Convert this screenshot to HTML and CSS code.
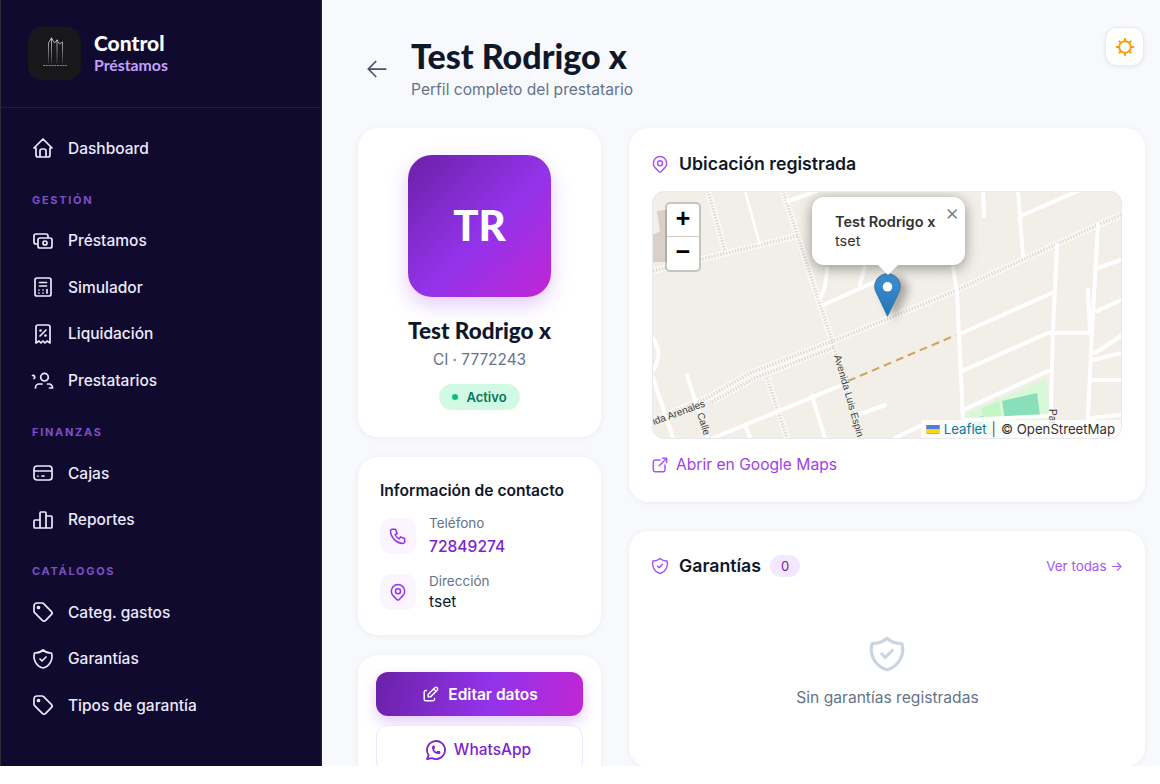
FILE: index.html
```html
<!DOCTYPE html>
<html lang="es">
<head>
    <meta charset="UTF-8">
    <meta name="viewport" content="width=device-width, initial-scale=1.0">
    <title>Test Rodrigo x</title>
    <link rel="stylesheet" href="styles.css">
</head>
<body>
    <svg class="sprite" aria-hidden="true">
        <symbol id="i-home" viewBox="0 0 24 24"><path d="M5 12H3l9-9 9 9h-2M5 12v7a2 2 0 0 0 2 2h10a2 2 0 0 0 2-2v-7M9 21v-6a2 2 0 0 1 2-2h2a2 2 0 0 1 2 2v6"/></symbol>
        <symbol id="i-cash" viewBox="0 0 24 24"><path d="M7 11a2 2 0 0 1 2-2h10a2 2 0 0 1 2 2v6a2 2 0 0 1-2 2H9a2 2 0 0 1-2-2zM12 14a2 2 0 1 0 4 0a2 2 0 1 0-4 0M17 9V7a2 2 0 0 0-2-2H5a2 2 0 0 0-2 2v6a2 2 0 0 0 2 2h2"/></symbol>
        <symbol id="i-calc" viewBox="0 0 24 24"><path d="M4 5a2 2 0 0 1 2-2h12a2 2 0 0 1 2 2v14a2 2 0 0 1-2 2H6a2 2 0 0 1-2-2zM8.500 7.500h7M8.500 11h7M8 15v.01M12 15v.01M16 14.500v3.500M8 18v.01M12 18v.01"/></symbol>
        <symbol id="i-receipt" viewBox="0 0 24 24"><path d="M9 14l6-6M9 8.500a.5.5 0 1 0 1 0a.5.5 0 1 0-1 0M14 13.500a.5.5 0 1 0 1 0a.5.5 0 1 0-1 0M5 21V5a2 2 0 0 1 2-2h10a2 2 0 0 1 2 2v16l-3-2-2 2-2-2-2 2-2-2-3 2"/></symbol>
        <symbol id="i-users" viewBox="0 0 24 24"><path d="M9.700 9.200a3.800 3.800 0 1 0 7.600 0a3.800 3.800 0 1 0-7.600 0M1.500 7.500a1.700 1.700 0 0 1 1.500 3M4.500 20v-.5a3.500 3.500 0 0 1 3.500-3.500h3M16.500 16h1.500a3.500 3.500 0 0 1 3.500 3.500v.5h-3"/></symbol>
        <symbol id="i-card" viewBox="0 0 24 24"><path d="M3 8a3 3 0 0 1 3-3h12a3 3 0 0 1 3 3v8a3 3 0 0 1-3 3H6a3 3 0 0 1-3-3zM3 10h18M7 15h.01M11 15h2"/></symbol>
        <symbol id="i-chart" viewBox="0 0 24 24"><path d="M3 13a1 1 0 0 1 1-1h4a1 1 0 0 1 1 1v6a1 1 0 0 1-1 1H4a1 1 0 0 1-1-1zM15 9a1 1 0 0 1 1-1h4a1 1 0 0 1 1 1v10a1 1 0 0 1-1 1h-4a1 1 0 0 1-1-1zM9 5a1 1 0 0 1 1-1h4a1 1 0 0 1 1 1v14a1 1 0 0 1-1 1h-4a1 1 0 0 1-1-1z"/></symbol>
        <symbol id="i-tag" viewBox="0 0 24 24"><path d="M6.500 7.500a1 1 0 1 0 2 0a1 1 0 1 0-2 0M3 6v5.172a2 2 0 0 0 .586 1.414l7.710 7.710a2.410 2.410 0 0 0 3.408 0l5.592-5.592a2.410 2.410 0 0 0 0-3.408l-7.710-7.710A2 2 0 0 0 11.172 3H6a3 3 0 0 0-3 3"/></symbol>
        <symbol id="i-shield" viewBox="0 0 24 24"><path d="M9 12l2 2l4-4M12 3a12 12 0 0 0 8.500 3a12 12 0 0 1-8.500 15a12 12 0 0 1-8.500-15a12 12 0 0 0 8.500-3"/></symbol>
        <symbol id="i-pin" viewBox="0 0 24 24"><path d="M9 11a3 3 0 1 0 6 0a3 3 0 0 0-6 0M17.657 16.657L13.414 20.900a2 2 0 0 1-2.827 0l-4.244-4.243a8 8 0 1 1 11.314 0z"/></symbol>
        <symbol id="i-phone" viewBox="0 0 24 24"><path d="M5 4h4l2 5l-2.500 1.500a11 11 0 0 0 5 5l1.500-2.500l5 2v4a2 2 0 0 1-2 2a16 16 0 0 1-15-15a2 2 0 0 1 2-2"/></symbol>
        <symbol id="i-external" viewBox="0 0 24 24"><path d="M12 6H6a2 2 0 0 0-2 2v10a2 2 0 0 0 2 2h10a2 2 0 0 0 2-2v-6M11 13l9-9M15 4h5v5"/></symbol>
        <symbol id="i-edit" viewBox="0 0 24 24"><path d="M7 7H6a2 2 0 0 0-2 2v9a2 2 0 0 0 2 2h9a2 2 0 0 0 2-2v-1M20.385 6.585a2.100 2.100 0 0 0-2.970-2.970L9 12v3h3zM16 5l3 3"/></symbol>
        <symbol id="i-whatsapp" viewBox="0 0 24 24"><path d="M3 21l1.650-3.800a9 9 0 1 1 3.400 2.900L3 21M9 10a.5.5 0 0 0 1 0V9a.5.5 0 0 0-1 0v1a5 5 0 0 0 5 5h1a.5.5 0 0 0 0-1h-1a.5.5 0 0 0 0 1"/></symbol>
        <symbol id="i-back" viewBox="0 0 24 24"><path d="M5 12h14M5 12l6 6M5 12l6-6"/></symbol>
        <symbol id="i-sun" viewBox="0 0 24 24"><circle cx="12" cy="12" r="7"/><path d="M12 2v3M12 19v3M2 12h3M19 12h3M5.200 5.200l1.600 1.600M17.200 17.200l1.600 1.600M5.200 18.800l1.600-1.600M17.200 6.800l1.600-1.600"/></symbol>
    </svg>

    <div class="app">
        <aside class="sidebar">
            <div class="brand">
                <div class="brand-logo">
                    <svg viewBox="0 0 52 52" width="52" height="52">
                        <defs>
                            <linearGradient id="logo-fade" gradientUnits="userSpaceOnUse" x1="0" y1="10" x2="0" y2="35">
                                <stop offset="0" stop-color="#e8e8ea"/>
                                <stop offset="1" stop-color="#3c3c40"/>
                            </linearGradient>
                        </defs>
                        <path class="logo-lines" d="M19.500 35V15l3-5 3 5 2.500-3 2.500 4 3-2v21M22.500 10v25M28 12v23"/>
                        <path class="logo-caption" d="M14 37.500h24"/>
                    </svg>
                </div>
                <div class="brand-text">
                    <div class="brand-name">Control</div>
                    <div class="brand-sub">Préstamos</div>
                </div>
            </div>
            <nav class="nav">
                <a class="nav-item"><svg class="icon"><use href="#i-home"/></svg>Dashboard</a>
                <div class="nav-label">GESTIÓN</div>
                <a class="nav-item"><svg class="icon"><use href="#i-cash"/></svg>Préstamos</a>
                <a class="nav-item"><svg class="icon"><use href="#i-calc"/></svg>Simulador</a>
                <a class="nav-item"><svg class="icon"><use href="#i-receipt"/></svg>Liquidación</a>
                <a class="nav-item"><svg class="icon"><use href="#i-users"/></svg>Prestatarios</a>
                <div class="nav-label">FINANZAS</div>
                <a class="nav-item"><svg class="icon"><use href="#i-card"/></svg>Cajas</a>
                <a class="nav-item"><svg class="icon"><use href="#i-chart"/></svg>Reportes</a>
                <div class="nav-label">CATÁLOGOS</div>
                <a class="nav-item"><svg class="icon"><use href="#i-tag"/></svg>Categ. gastos</a>
                <a class="nav-item"><svg class="icon"><use href="#i-shield"/></svg>Garantías</a>
                <a class="nav-item"><svg class="icon"><use href="#i-tag"/></svg>Tipos de garantía</a>
            </nav>
        </aside>

        <main class="main">
            <button class="theme-btn"><svg class="icon-sun"><use href="#i-sun"/></svg></button>

            <header class="page-head">
                <button class="back-btn"><svg class="icon-back"><use href="#i-back"/></svg></button>
                <div>
                    <h1 class="page-title">Test Rodrigo x</h1>
                    <p class="page-sub">Perfil completo del prestatario</p>
                </div>
            </header>

            <div class="columns">
                <div class="col-left">
                    <section class="card profile">
                        <div class="avatar">TR</div>
                        <h2 class="profile-name">Test Rodrigo x</h2>
                        <div class="profile-ci">CI · 7772243</div>
                        <span class="status"><i class="status-dot"></i>Activo</span>
                    </section>

                    <section class="card contact">
                        <h3 class="contact-title">Información de contacto</h3>
                        <div class="contact-row">
                            <div class="contact-icon"><svg class="icon-sm"><use href="#i-phone"/></svg></div>
                            <div>
                                <div class="contact-label">Teléfono</div>
                                <div class="contact-phone">72849274</div>
                            </div>
                        </div>
                        <div class="contact-row">
                            <div class="contact-icon"><svg class="icon-sm"><use href="#i-pin"/></svg></div>
                            <div>
                                <div class="contact-label">Dirección</div>
                                <div class="contact-value">tset</div>
                            </div>
                        </div>
                    </section>

                    <section class="card actions">
                        <button class="btn btn-primary"><svg class="icon-btn"><use href="#i-edit"/></svg>Editar datos</button>
                        <button class="btn btn-outline"><svg class="icon-wa"><use href="#i-whatsapp"/></svg>WhatsApp</button>
                    </section>
                </div>

                <div class="col-right">
                    <section class="card location">
                        <div class="card-head">
                            <svg class="icon-title"><use href="#i-pin"/></svg>
                            <h3 class="card-title">Ubicación registrada</h3>
                        </div>
                        <div class="map">
                            <svg class="map-tiles" viewBox="652 191 469 247" width="469" height="247">
                                <path class="building" d="M657 211l10-1v52h-14v-27l7-4z"/>
                                <path class="park" d="M964 415l83-37 3 42-86 18z"/>
                                <path class="park-light" d="M982 408l17-7 3 20-18 2z"/>
                                <path class="pitch" d="M1002 401l35-8 3 22-35 5zM968 419l15-3 1 14-16 0z"/>
                                <defs>
                                    <path id="foot-roads" d="M653 271L797 236M708 191L725 251M783 191L832 341L860 438M653 420L707 398L750 373L833 341L885 320L955 291L1098 225L1121 215M712 402L755 378L835 347M767 378L787 438"/>
                                </defs>
                                <use class="road-foot" href="#foot-roads"/>
                                <use class="road-foot-dash" href="#foot-roads"/>
                                <path class="road-thin" d="M745 191L760 245"/>
                                <path class="road" d="M788 201L817 191M823 305L877 281M820 298Q826 290 827 268M860 285L865 265M713 438L847 383M812 396L825 438M745 425L750 438M858 415L885 405M687 375L707 438M653 378L673 438M653 338Q660 350 658 358Q657 366 653 370"/>
                                <path class="road" d="M953 268L957 291L963 421L964 438M983 191L984 216M1018 191L1023 256M1023 215L1078 191M1057 245L1053 331L1050 438M1098 225L1092 331L1087 438M1088 290L1090 331M962 333L1052 293M962 371L1048 333L1090 333M963 410L1048 371M1098 268L1121 260M1097 311L1121 300M1095 353L1121 336M1093 360L1121 353M1093 380L1121 380M1090 418L1121 415M965 420L1050 416M895 438L920 426"/>
                                <path class="track" d="M848 381L956 335"/>
                                <text class="map-text" transform="translate(654 425) rotate(-20)">ida Arenales</text>
                                <text class="map-text" transform="translate(697 414) rotate(72)">Calle</text>
                                <text class="map-text" transform="translate(834 356) rotate(74)">Avenida Luis Espin</text>
                                <text class="map-text" transform="translate(1049 409) rotate(90)">Par</text>
                            </svg>

                            <div class="zoom-ctrl">
                                <div class="zoom-btn">+</div>
                                <div class="zoom-btn">−</div>
                            </div>

                            <svg class="marker" viewBox="0 0 27 44" width="27" height="44">
                                <defs>
                                    <linearGradient id="pin-fill" x1="0" y1="0" x2="0" y2="1">
                                        <stop offset="0" stop-color="#3f8fd0"/>
                                        <stop offset="1" stop-color="#2573b8"/>
                                    </linearGradient>
                                </defs>
                                <path d="M13.500 .7C6.200 .7 .7 6.300 .7 13.300c0 3 1 5.500 2.500 8.200L13.500 43.300l10.300-21.800c1.500-2.700 2.500-5.200 2.500-8.200C26.300 6.300 20.800 .7 13.500 .7z" fill="url(#pin-fill)" stroke="#2c6f9f" stroke-width=".8"/>
                                <circle cx="13.500" cy="13.800" r="4.800" fill="#fff"/>
                            </svg>

                            <div class="popup">
                                <span class="popup-close">×</span>
                                <div class="popup-name">Test Rodrigo x</div>
                                <div class="popup-text">tset</div>
                                <i class="popup-tip"></i>
                            </div>

                            <div class="attribution">
                                <svg class="flag" viewBox="0 0 12 8" width="14" height="9"><path fill="#4c7be1" d="M0 0h12v4H0z"/><path fill="#ffd500" d="M0 4h12v3H0z"/><path fill="#e0bc00" d="M0 7h12v1H0z"/></svg>
                                <span class="attr-link">Leaflet</span>
                                <span class="attr-sep">|</span>
                                <span>© OpenStreetMap</span>
                            </div>
                        </div>
                        <a class="maps-link"><svg class="icon-title"><use href="#i-external"/></svg>Abrir en Google Maps</a>
                    </section>

                    <section class="card guarantees">
                        <div class="card-head">
                            <svg class="icon-title"><use href="#i-shield"/></svg>
                            <h3 class="card-title">Garantías</h3>
                            <span class="count">0</span>
                            <a class="see-all">Ver todas →</a>
                        </div>
                        <div class="empty">
                            <svg class="icon-empty"><use href="#i-shield"/></svg>
                            <p class="empty-text">Sin garantías registradas</p>
                        </div>
                    </section>
                </div>
            </div>
        </main>
    </div>
</body>
</html>
```

FILE: styles.css
```css
/* General */
* {
    box-sizing: border-box;
}

body {
    margin: 0;
    background: #fff;
    font-family: 'Inter', sans-serif;
    color: #0f172a;
}

h1, h2, h3, p {
    margin: 0;
}

button {
    font-family: inherit;
    cursor: pointer;
}

.sprite {
    display: none;
}

svg {
    fill: none;
    stroke: currentColor;
    stroke-width: 1.8;
    stroke-linecap: round;
    stroke-linejoin: round;
}

.app {
    display: flex;
    height: 766px;
    overflow: hidden;
    background: #f8f9fc;
}

/* Sidebar */
.sidebar {
    flex: 0 0 322px;
    background: #0f0a2e;
    border-left: 1px solid #2c2c38;
    border-right: 1px solid #1e293b;
    color: #ede9fe;
}

.brand {
    display: flex;
    align-items: center;
    gap: 13px;
    height: 108px;
    padding: 0 27px;
    border-bottom: 1px solid #241f42;
}

.brand-logo {
    width: 53px;
    height: 53px;
    border-radius: 14px;
    background: #18181b;
    display: flex;
    align-items: center;
    justify-content: center;
}

.logo-lines {
    stroke: url(#logo-fade);
    stroke-width: .8;
}

.logo-caption {
    stroke: #8a8a8e;
    stroke-width: 1;
    stroke-dasharray: 2 .8;
    stroke-linecap: butt;
}

.brand-text {
    margin-top: -2px;
}

.brand-name {
    font-family: 'Lato', sans-serif;
    font-size: 21px;
    font-weight: 900;
    line-height: 24px;
    color: #fff;
}

.brand-sub {
    font-family: 'Lato', sans-serif;
    font-size: 15.800px;
    font-weight: 700;
    line-height: 20px;
    color: #c4a1fb;
}

.nav {
    display: flex;
    flex-direction: column;
    padding: 20.950px 0 0 31px;
}

.nav-item {
    display: flex;
    align-items: center;
    gap: 13px;
    height: 38.500px;
    margin-bottom: 8px;
    font-size: 15.500px;
    font-weight: 500;
}

.icon {
    width: 24px;
    height: 24px;
    flex: none;
    margin-left: -1px;
    stroke-width: 1.700;
}

.nav-label {
    height: 14px;
    margin: 17.500px 0 14.670px;
    font-size: 11px;
    font-weight: 700;
    line-height: 14px;
    letter-spacing: 1.700px;
    color: #7c4fc4;
}

/* Main */
.main {
    position: relative;
    flex: 1;
    min-width: 0;
    padding: 36px 16px 0 36px;
}

.theme-btn {
    position: absolute;
    top: 27px;
    right: 16px;
    width: 39px;
    height: 39px;
    padding: 0;
    display: flex;
    align-items: center;
    justify-content: center;
    background: #fff;
    border: 1px solid #e8ebf2;
    border-radius: 12px;
    box-shadow: 0 1px 4px rgba(15, 23, 42, 0.08);
    color: #f59e0b;
}

.icon-sun {
    width: 20px;
    height: 20px;
    stroke-width: 2.300;
}

.page-head {
    display: flex;
    align-items: center;
    gap: 15px;
    margin-bottom: 27px;
}

.back-btn {
    width: 38px;
    height: 38px;
    padding: 0;
    border: none;
    background: none;
    color: #475569;
    display: flex;
    align-items: center;
    justify-content: center;
}

.icon-back {
    width: 30px;
    height: 30px;
    flex: none;
    stroke-width: 1.400;
}

.page-title {
    font-family: 'Lato', sans-serif;
    font-size: 34px;
    font-weight: 900;
    line-height: 40px;
}

.page-sub {
    margin-top: 3px;
    font-size: 15.600px;
    line-height: 22px;
    color: #64748b;
}

.columns {
    display: grid;
    grid-template-columns: 243px 1fr;
    gap: 28px;
    align-items: start;
}

.col-left {
    display: flex;
    flex-direction: column;
    gap: 20px;
}

.col-right {
    display: flex;
    flex-direction: column;
    gap: 29px;
}

.card {
    background: #fff;
    border-radius: 20px;
    box-shadow: 0 1px 6px rgba(15, 23, 42, 0.06);
}

/* Profile card */
.profile {
    height: 309px;
    padding-top: 27px;
    display: flex;
    flex-direction: column;
    align-items: center;
}

.avatar {
    width: 143px;
    height: 142px;
    border-radius: 24px;
    background: linear-gradient(135deg, #6b21a8, #9333ea 55%, #c026d3);
    box-shadow: 0 8px 20px rgba(147, 51, 234, 0.25);
    color: #fff;
    font-family: 'Lato', sans-serif;
    font-size: 42px;
    font-weight: 900;
    padding-bottom: 2px;
    display: flex;
    align-items: center;
    justify-content: center;
}

.profile-name {
    margin-top: 20px;
    font-family: 'Lato', sans-serif;
    font-size: 22.500px;
    font-weight: 900;
    line-height: 28px;
}

.profile-ci {
    margin-top: 5px;
    font-size: 15.400px;
    line-height: 20px;
    color: #64748b;
}

.status {
    margin-top: 14px;
    display: flex;
    align-items: center;
    gap: 8px;
    height: 26px;
    padding: 0 13px 1px;
    border-radius: 13px;
    background: #d1fae5;
    color: #047857;
    font-size: 13px;
    font-weight: 600;
}

.status-dot {
    width: 6px;
    height: 6px;
    border-radius: 50%;
    background: #10b981;
}

/* Contact card */
.contact {
    height: 178px;
    padding: 24px 22px 0;
}

.contact-title {
    font-size: 15.600px;
    font-weight: 600;
    line-height: 20px;
    margin-bottom: 13px;
}

.contact-row {
    display: flex;
    align-items: center;
    gap: 13px;
    margin-bottom: 15px;
}

.contact-icon {
    width: 36px;
    height: 36px;
    border-radius: 10px;
    background: #faf5ff;
    color: #9333ea;
    display: flex;
    align-items: center;
    justify-content: center;
}

.icon-sm {
    width: 20px;
    height: 20px;
}

.contact-label {
    font-size: 13.500px;
    line-height: 18px;
    color: #64748b;
}

.contact-phone {
    margin-top: 5px;
    font-size: 15.600px;
    font-weight: 500;
    line-height: 20px;
    color: #7e22ce;
}

.contact-value {
    margin-top: 2px;
    font-size: 15.600px;
    line-height: 20px;
}

/* Actions */
.actions {
    padding: 17px 18px;
    display: flex;
    flex-direction: column;
    gap: 9px;
}

.btn {
    height: 44px;
    display: flex;
    align-items: center;
    justify-content: center;
    gap: 8px;
    border-radius: 12px;
    font-size: 15.500px;
}

.btn-primary {
    border: none;
    background: linear-gradient(100deg, #6b21a8, #9333ea 55%, #c026d3);
    box-shadow: 0 6px 14px rgba(147, 51, 234, 0.25);
    color: #fff;
    font-weight: 600;
}

.btn-outline {
    height: 49px;
    gap: 6px;
    border: 1px solid #f0e4fe;
    background: #fff;
    color: #7e22ce;
    font-weight: 500;
}

.icon-btn {
    width: 19px;
    height: 19px;
}

.icon-wa {
    width: 24px;
    height: 24px;
    margin-left: -4px;
}

/* Location card */
.location {
    height: 374px;
    padding: 24px 23px 0;
}

.card-head {
    display: flex;
    align-items: center;
    height: 24px;
}

.icon-title {
    width: 20px;
    height: 20px;
    flex: none;
    margin-left: -2px;
    color: #a855f7;
}

.card-title {
    margin-left: 9px;
    font-size: 17.700px;
    font-weight: 600;
    line-height: 24px;
}

.map {
    position: relative;
    height: 248px;
    margin-top: 15px;
    border: 1px solid #e8e8ee;
    border-radius: 12px;
    overflow: hidden;
    background: #f2efe9;
}

.map-tiles {
    display: block;
    margin: -1px 0 0 -1px;
    stroke-linecap: butt;
}

.building {
    fill: #d9d0c9;
    stroke: none;
}

.park {
    fill: #d8f8d8;
    stroke: none;
}

.park-light {
    fill: #c4f5c4;
    stroke: none;
}

.pitch {
    fill: #88dfba;
    stroke: none;
}

.road {
    stroke: #fff;
    stroke-width: 4;
    stroke-linecap: round;
}

.road-thin {
    stroke: #fff;
    stroke-width: 2.500;
}

.road-foot {
    stroke: #fbfaf8;
    stroke-width: 6;
}

.road-foot-dash {
    stroke: #dedbd5;
    stroke-width: 3.500;
    stroke-dasharray: 1.500 1.500;
}

.track {
    stroke: #c9a35f;
    stroke-width: 2;
    stroke-dasharray: 8 5;
    stroke-linecap: butt;
}

.map-text {
    font-family: 'Liberation Sans', sans-serif;
    font-size: 10px;
    fill: #3c3c3c;
    stroke: #f2efe9;
    stroke-width: 1.500;
    paint-order: stroke;
}

.zoom-ctrl {
    position: absolute;
    top: 10px;
    left: 12px;
    width: 36px;
    border: 2px solid rgba(0, 0, 0, 0.18);
    border-radius: 5px;
    background: #fff;
    background-clip: padding-box;
}

.zoom-btn {
    height: 33px;
    font-family: 'Liberation Mono', monospace;
    font-size: 25px;
    font-weight: 700;
    line-height: 33px;
    text-align: center;
    color: #000;
}

.zoom-btn:first-child {
    border-bottom: 1px solid #ccc;
}

.marker {
    position: absolute;
    top: 81px;
    left: 221px;
    filter: drop-shadow(7px 3px 4px rgba(0, 0, 0, 0.3));
    stroke: none;
}

.popup {
    position: absolute;
    top: 5px;
    left: 159px;
    width: 153px;
    height: 68px;
    padding: 15px 23px 0;
    border-radius: 12px;
    background: #fff;
    box-shadow: 0 3px 14px rgba(0, 0, 0, 0.4);
    color: #333;
    font-size: 14.500px;
    line-height: 19px;
}

.popup-name {
    font-weight: 600;
    white-space: nowrap;
}

.popup-close {
    position: absolute;
    top: 3px;
    right: 6px;
    width: 14px;
    font-size: 22px;
    font-weight: 300;
    line-height: 24px;
    text-align: center;
    color: #757575;
}

.popup-tip {
    position: absolute;
    left: 66px;
    bottom: -10px;
    width: 20px;
    height: 10px;
    background: #fff;
    clip-path: polygon(0 0, 100% 0, 50% 100%);
}

.attribution {
    position: absolute;
    right: 0;
    bottom: 0;
    height: 18px;
    display: flex;
    align-items: center;
    gap: 4px;
    padding: 0 6px 0 5px;
    background: rgba(255, 255, 255, 0.8);
    font-size: 13.200px;
    color: #333;
    border-top-left-radius: 3px;
}

.flag {
    stroke: none;
}

.attr-link {
    color: #0078a8;
}

.attr-sep {
    color: #555;
    margin: 0 1px;
}

.maps-link {
    display: flex;
    align-items: center;
    gap: 6px;
    margin-top: 16px;
    font-size: 15.600px;
    line-height: 20px;
    color: #a03fe6;
}

/* Guarantees */
.guarantees {
    height: 236px;
    padding: 23px 22px 0 23px;
}

.count {
    margin-left: 9px;
    width: 30px;
    height: 22px;
    border-radius: 11px;
    background: #f3e8ff;
    color: #6b21a8;
    font-size: 13px;
    line-height: 22px;
    text-align: center;
}

.see-all {
    margin: -1px 0 0 auto;
    font-size: 13.400px;
    color: #a855f7;
}

.empty {
    margin-top: 55px;
    display: flex;
    flex-direction: column;
    align-items: center;
}

.icon-empty {
    width: 42px;
    height: 42px;
    margin-left: -2px;
    color: #cbd5e1;
    stroke-width: 1.800;
}

.empty-text {
    margin-top: 13px;
    font-size: 15.600px;
    line-height: 20px;
    color: #64748b;
}
```
